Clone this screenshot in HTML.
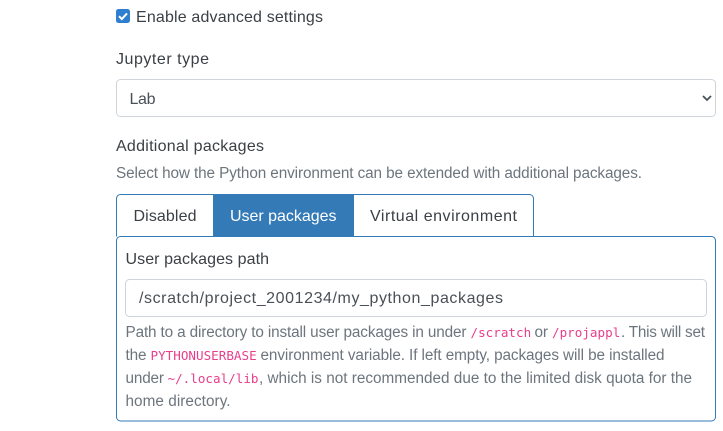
<!DOCTYPE html>
<html><head><meta charset="utf-8"><title>Settings</title>
<style>
html,body{margin:0;padding:0;background:#fff;width:723px;height:431px;overflow:hidden}
svg{display:block}
text{font-family:"Liberation Sans",sans-serif;font-size:16px;fill:#3a4046;white-space:pre}
.h{fill:#6c757d;font-size:15.3px}
.m{font-family:"DejaVu Sans Mono",monospace;font-size:12.6px;fill:#e83e8c}
.f{fill:#495057}
</style></head><body>
<svg width="723" height="431" viewBox="0 0 723 431" xmlns="http://www.w3.org/2000/svg">
<rect x="116" y="9" width="14" height="14" rx="2.5" fill="#2f7fd0"/>
<path d="M119 16.2l2.8 2.8 5.2-5.6" fill="none" stroke="#fff" stroke-width="2"/>
<text x="136" y="22" textLength="187">Enable advanced settings</text>
<text x="116" y="64" textLength="93">Jupyter type</text>
<rect x="116.5" y="79.5" width="599" height="37" rx="4" fill="#fff" stroke="#ced4da"/>
<text class="f" x="129.5" y="104" textLength="26">Lab</text>
<path d="M703 96l4 4 4-4" fill="none" stroke="#495057" stroke-width="1.8"/>
<text x="116" y="151" textLength="148">Additional packages</text>
<text class="h" x="116" y="178" textLength="526">Select how the Python environment can be extended with additional packages.</text>
<path d="M116.5 236.5V198.5a4 4 0 0 1 4-4H529.5a4 4 0 0 1 4 4V236.5" fill="#fff" stroke="#337ab7"/>
<rect x="213" y="194" width="141" height="43" fill="#337ab7"/>
<rect x="116.5" y="236.5" width="599" height="184.5" rx="4" fill="#fff" stroke="#337ab7"/>
<rect x="213" y="236" width="141" height="1" fill="#337ab7"/>
<text x="133.5" y="221" textLength="63">Disabled</text>
<text x="230" y="221" textLength="106.5" style="fill:#fff">User packages</text>
<text x="370" y="221" textLength="147">Virtual environment</text>
<text x="125.5" y="264" textLength="143.5">User packages path</text>
<rect x="125.5" y="279.5" width="581" height="37" rx="4" fill="#fff" stroke="#ced4da"/>
<text class="f" x="139" y="303" textLength="364">/scratch/project_2001234/my_python_packages</text>
<text class="h" x="125.5" y="337" textLength="341">Path to a directory to install user packages in under</text>
<text class="m" x="470.5" y="337">/scratch</text>
<text class="h" x="534.5" y="337" textLength="13.5">or</text>
<text class="m" x="552" y="337">/projappl</text>
<text class="h" x="621" y="337" textLength="84">. This will set</text>
<text class="h" x="125.5" y="360" textLength="21">the</text>
<text class="m" x="150.5" y="360">PYTHONUSERBASE</text>
<text class="h" x="260.5" y="360" textLength="404">environment variable. If left empty, packages will be installed</text>
<text class="h" x="125.5" y="383" textLength="38.5">under</text>
<text class="m" x="167.5" y="383">~/.local/lib</text>
<text class="h" x="259" y="383" textLength="433">, which is not recommended due to the limited disk quota for the</text>
<text class="h" x="125.5" y="406" textLength="105">home directory.</text>
</svg>
</body></html>
